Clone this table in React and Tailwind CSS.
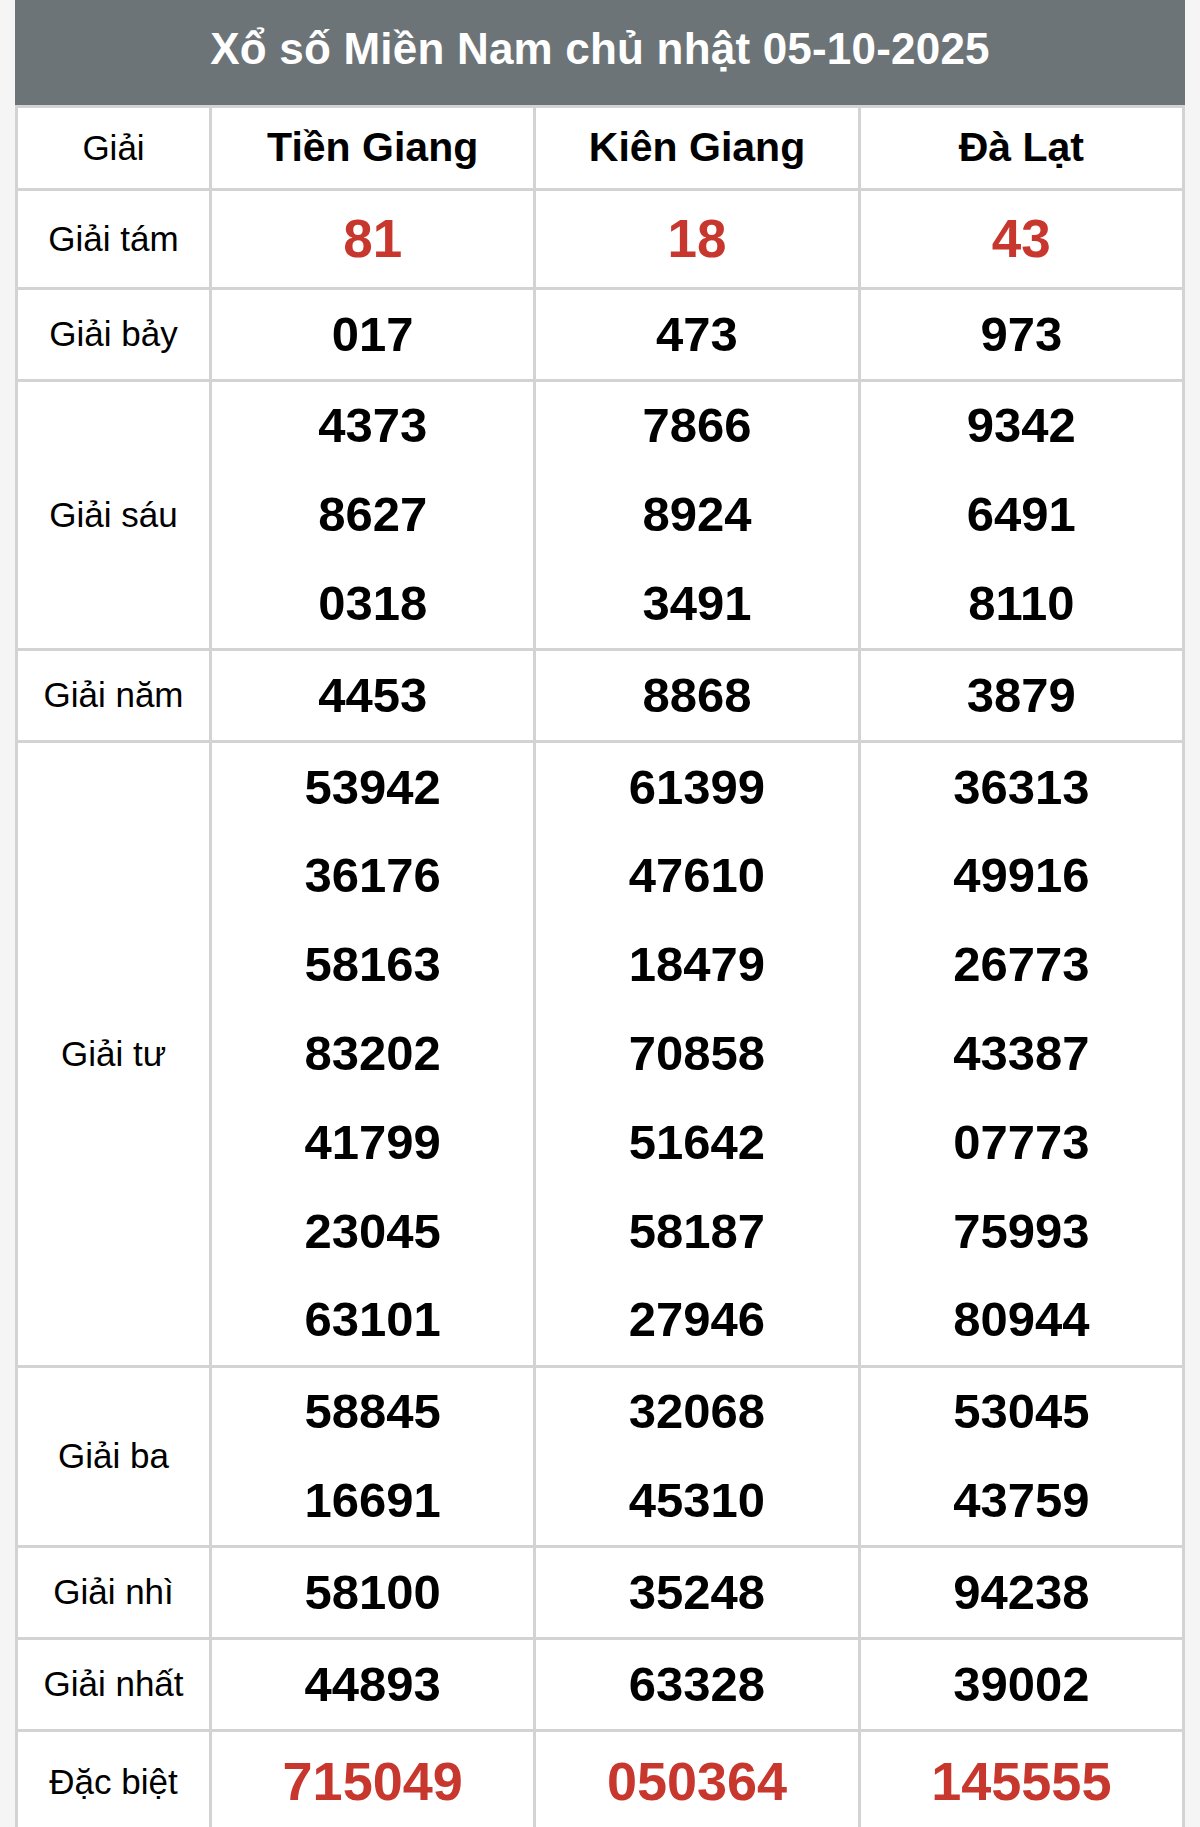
import React from "react";

const cols = ["Tiền Giang", "Kiên Giang", "Đà Lạt"];

const rows = [
  { label: "Giải tám", h: "h-[96px]", red: true, size: "text-[53px]", data: [["81"], ["18"], ["43"]] },
  { label: "Giải bảy", data: [["017"], ["473"], ["973"]] },
  { label: "Giải sáu", data: [["4373", "8627", "0318"], ["7866", "8924", "3491"], ["9342", "6491", "8110"]] },
  { label: "Giải năm", data: [["4453"], ["8868"], ["3879"]] },
  {
    label: "Giải tư",
    data: [
      ["53942", "36176", "58163", "83202", "41799", "23045", "63101"],
      ["61399", "47610", "18479", "70858", "51642", "58187", "27946"],
      ["36313", "49916", "26773", "43387", "07773", "75993", "80944"],
    ],
  },
  { label: "Giải ba", data: [["58845", "16691"], ["32068", "45310"], ["53045", "43759"]] },
  { label: "Giải nhì", data: [["58100"], ["35248"], ["94238"]] },
  { label: "Giải nhất", data: [["44893"], ["63328"], ["39002"]] },
  { label: "Đặc biệt", h: "h-[100px]", red: true, size: "text-[54px]", data: [["715049"], ["050364"], ["145555"]] },
];

export default function App() {
  return (
    <div
      className="min-h-screen bg-[#f5f5f5] pl-[15px]"
      style={{ fontFamily: '"Liberation Sans", Arial, sans-serif' }}
    >
      <div className="w-[1170px]">
        <div className="h-[105px] bg-[#6c7477] flex items-center justify-center text-white font-bold text-[44px] tracking-[0.2px] pb-[7px]">
          Xổ số Miền Nam chủ nhật 05-10-2025
        </div>
        <table className="w-full table-fixed border-collapse bg-white text-black">
          <colgroup>
            <col className="w-[194px]" />
            <col />
            <col />
            <col />
          </colgroup>
          <tbody>
            <tr>
              <td className="border-[3px] border-[#d3d3d3] p-0 text-center align-middle">
                <div className="h-[80px] flex items-center justify-center text-[35px]">Giải</div>
              </td>
              {cols.map((c) => (
                <td key={c} className="border-[3px] border-[#d3d3d3] p-0 text-center align-middle">
                  <div className="h-[80px] flex items-center justify-center text-[41px] font-bold">{c}</div>
                </td>
              ))}
            </tr>
            {rows.map((r) => (
              <tr key={r.label}>
                <td className="border-[3px] border-[#d3d3d3] p-0 text-center align-middle text-[35px]">
                  {r.label}
                </td>
                {r.data.map((list, i) => (
                  <td key={i} className="border-[3px] border-[#d3d3d3] p-0 text-center align-middle">
                    {list.map((n) => (
                      <div
                        key={n}
                        className={`${r.h || "h-[88.8px]"} flex items-center justify-center font-bold ${
                          r.size || "text-[49px]"
                        } ${r.red ? "text-[#c8372d]" : "text-black"}`}
                      >
                        {n}
                      </div>
                    ))}
                  </td>
                ))}
              </tr>
            ))}
          </tbody>
        </table>
      </div>
    </div>
  );
}
